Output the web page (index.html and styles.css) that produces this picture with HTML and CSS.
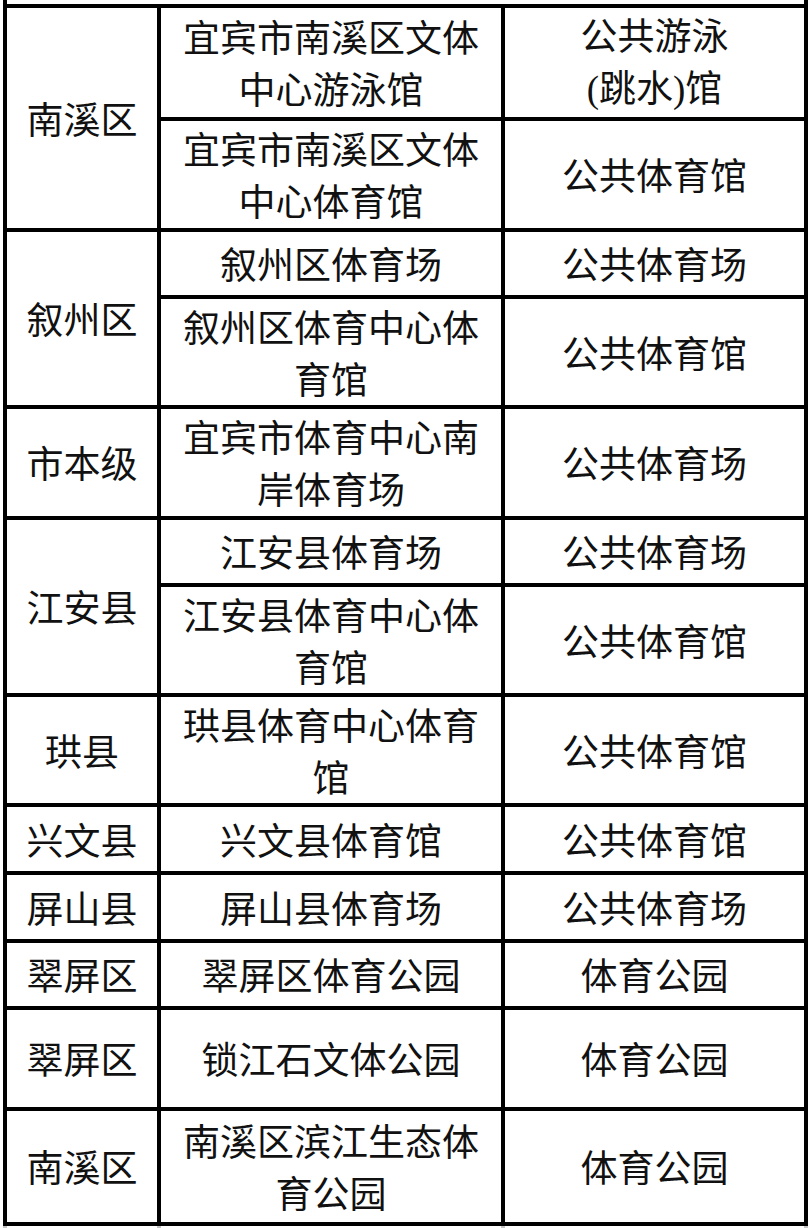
FILE: index.html
```html
<!DOCTYPE html>
<html lang="zh-CN">
<head>
<meta charset="utf-8">
<title>宜宾市体育场馆</title>
<link rel="stylesheet" href="styles.css">
</head>
<body>
<table class="venues">
  <colgroup>
    <col class="c1">
    <col class="c2">
    <col class="c3">
  </colgroup>
  <tr class="edge-top"><td class="lead" colspan="3"></td></tr>
  <tr class="r109">
    <td class="lead" rowspan="2">南溪区</td>
    <td>宜宾市南溪区文体中心游泳馆</td>
    <td>公共游泳<br><span class="lat">(</span>跳水<span class="lat">)</span>馆</td>
  </tr>
  <tr class="r111">
    <td>宜宾市南溪区文体中心体育馆</td>
    <td>公共体育馆</td>
  </tr>
  <tr class="r67">
    <td class="lead" rowspan="2">叙州区</td>
    <td>叙州区体育场</td>
    <td>公共体育场</td>
  </tr>
  <tr class="r110">
    <td>叙州区体育中心体育馆</td>
    <td>公共体育馆</td>
  </tr>
  <tr class="r111">
    <td class="lead">市本级</td>
    <td>宜宾市体育中心南岸体育场</td>
    <td>公共体育场</td>
  </tr>
  <tr class="r67">
    <td class="lead" rowspan="2">江安县</td>
    <td>江安县体育场</td>
    <td>公共体育场</td>
  </tr>
  <tr class="r110">
    <td>江安县体育中心体育馆</td>
    <td>公共体育馆</td>
  </tr>
  <tr class="r110">
    <td class="lead">珙县</td>
    <td>珙县体育中心体育馆</td>
    <td>公共体育馆</td>
  </tr>
  <tr class="r68">
    <td class="lead">兴文县</td>
    <td>兴文县体育馆</td>
    <td>公共体育馆</td>
  </tr>
  <tr class="r68">
    <td class="lead">屏山县</td>
    <td>屏山县体育场</td>
    <td>公共体育场</td>
  </tr>
  <tr class="r67">
    <td class="lead">翠屏区</td>
    <td>翠屏区体育公园</td>
    <td>体育公园</td>
  </tr>
  <tr class="r101">
    <td class="lead">翠屏区</td>
    <td>锁江石文体公园</td>
    <td>体育公园</td>
  </tr>
  <tr class="r115">
    <td class="lead">南溪区</td>
    <td>南溪区滨江生态体育公园</td>
    <td>体育公园</td>
  </tr>
  <tr class="ghost">
    <td class="lead"></td>
    <td></td>
    <td></td>
  </tr>
</table>
</body>
</html>
```

FILE: styles.css
```css
html, body {
  margin: 0;
  padding: 0;
  background: #ffffff;
}

.venues {
  border-collapse: separate;
  border-spacing: 0;
  table-layout: fixed;
  width: 805px;
  margin-left: 3px;
  font-family: "Noto Sans CJK SC", "Noto Sans", sans-serif;
  font-size: 37px;
  line-height: 52px;
  color: #111111;
}

.c1 { width: 158px; }
.c2 { width: 344px; }
.c3 { width: 303px; }

.venues td {
  box-sizing: border-box;
  border: 0 solid #000000;
  border-right-width: 4px;
  border-bottom-width: 4px;
  padding: 0 10px 1px;
  text-align: center;
  vertical-align: middle;
  word-break: break-all;
}

.venues td.lead {
  border-left-width: 4px;
}

.lat {
  font-family: "Liberation Serif", serif;
}

.edge-top { height: 8px; }
.edge-top td {
  padding: 0;
  line-height: 0;
  font-size: 0;
}

.r67 { height: 67px; }
.r68 { height: 68px; }
.r101 { height: 101px; }
.r109 { height: 109px; }
.r110 { height: 110px; }
.r111 { height: 111px; }
.r115 { height: 115px; }

.ghost { height: 40px; }
.ghost td {
  border-color: #c4c4c4;
  border-bottom-width: 0;
}
```
